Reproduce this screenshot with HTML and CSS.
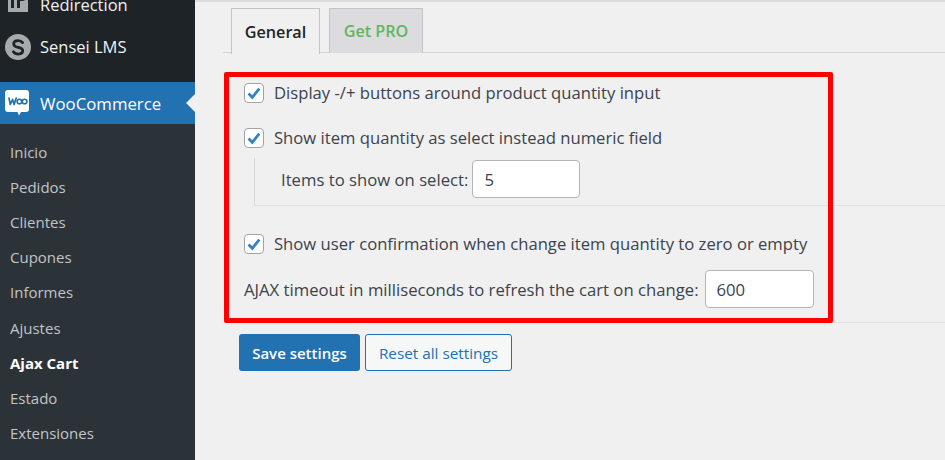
FILE: index.html
```html
<!DOCTYPE html>
<html lang="es">
<head>
<meta charset="utf-8">
<title>Ajax Cart</title>
<link rel="stylesheet" href="styles.css">
</head>
<body>
<div class="page">
  <aside class="sidebar">
    <ul class="menu">
      <li class="menu-item">
        <span class="icon-clip"><svg viewBox="0 0 20 24" width="20" height="24"><path fill="#a7aaad" d="M0 0h20v24H0z"/><path fill="#1d2327" d="M3 2h3v18H3zM9 2h3v18H9zM9 2h5a5 5 0 0 1 0 11H9v-3h4.500a2 2 0 0 0 0-5H9z"/></svg></span>
        <span class="label">Redirection</span>
      </li>
      <li class="menu-item">
        <svg class="icon" viewBox="0 0 26 26" width="26" height="26"><circle cx="13" cy="13" r="13" fill="#a7aaad"/><path fill="none" stroke="#1d2327" stroke-width="2.800" stroke-linecap="round" d="M17.600 8.600c-1-1.400-2.700-2-4.600-2-2.400 0-4.300 1.200-4.300 3.300 0 4.700 9 2.300 9 6.700 0 2.200-2 3.500-4.500 3.500-2 0-3.800-.8-4.800-2.300"/></svg>
        <span class="label">Sensei LMS</span>
      </li>
      <li class="menu-item current">
        <svg class="woo" viewBox="0 0 24 26" width="24" height="26"><path fill="#fff" d="M3 0h18a3 3 0 0 1 3 3v16a3 3 0 0 1-3 3h-5l-2 3.500-1.500-3.500H3a3 3 0 0 1-3-3V3a3 3 0 0 1 3-3z"/><path fill="none" stroke="#2271b1" stroke-width="1.700" stroke-linecap="round" stroke-linejoin="round" d="M4 8l1.300 6.500L7.600 9.500l1.500 5L11.200 8"/><circle cx="14.400" cy="11.500" r="2.300" fill="none" stroke="#2271b1" stroke-width="1.600"/><circle cx="19.600" cy="11.500" r="2.300" fill="none" stroke="#2271b1" stroke-width="1.600"/></svg>
        <span class="label">WooCommerce</span>
      </li>
    </ul>
    <ul class="submenu">
      <li>Inicio</li>
      <li>Pedidos</li>
      <li>Clientes</li>
      <li>Cupones</li>
      <li>Informes</li>
      <li>Ajustes</li>
      <li class="active">Ajax Cart</li>
      <li>Estado</li>
      <li>Extensiones</li>
    </ul>
  </aside>
  <main class="content">
    <nav class="tabs">
      <a class="tab tab-active">General</a>
      <a class="tab tab-pro">Get PRO</a>
    </nav>
    <form class="settings">
      <div class="check-row first">
        <span class="checkbox"><svg viewBox="0 0 20 20" width="20" height="20"><path fill="none" stroke="#3582c4" stroke-width="2.800" d="M4.500 10.500l3.800 3.800 7-8.600"/></svg></span>
        <span class="check-label">Display -/+ buttons around product quantity input</span>
      </div>
      <div class="check-row second">
        <span class="checkbox"><svg viewBox="0 0 20 20" width="20" height="20"><path fill="none" stroke="#3582c4" stroke-width="2.800" d="M4.500 10.500l3.800 3.800 7-8.600"/></svg></span>
        <span class="check-label">Show item quantity as select instead numeric field</span>
      </div>
      <div class="sub-row">
        <span>Items to show on select:</span>
        <span class="input input-small">5</span>
      </div>
      <div class="check-row third">
        <span class="checkbox"><svg viewBox="0 0 20 20" width="20" height="20"><path fill="none" stroke="#3582c4" stroke-width="2.800" d="M4.500 10.500l3.800 3.800 7-8.600"/></svg></span>
        <span class="check-label">Show user confirmation when change item quantity to zero or empty</span>
      </div>
      <div class="timeout-row">
        <span>AJAX timeout in milliseconds to refresh the cart on change:</span>
        <span class="input input-wide">600</span>
      </div>
      <div class="actions">
        <span class="btn btn-primary">Save settings</span>
        <span class="btn btn-secondary">Reset all settings</span>
      </div>
    </form>
    <div class="highlight"></div>
  </main>
</div>
</body>
</html>
```
FILE: styles.css
```css
* { box-sizing: border-box; }
html, body { margin: 0; padding: 0; height: 100%; overflow: hidden; }
body { background: #f0f0f1; font-family: "Open Sans", "Noto Sans", sans-serif; color: #3c434a; font-size: 16.700px; }
.page { display: flex; width: 945px; height: 460px; overflow: hidden; }

.sidebar { width: 195px; flex: none; background: #1d2327; overflow: hidden; }
.menu, .submenu { list-style: none; margin: 0; padding: 0; }
.menu { margin-top: -16px; }
.menu-item { display: flex; align-items: center; height: 42px; padding-left: 5px; color: #f0f0f1; font-size: 16.500px; }
.menu-item .label { margin-left: 9px; line-height: 40px; height: 40px; margin-bottom: 1px; }
.menu-item .icon { flex: none; }
.icon-clip { flex: none; width: 20px; height: 24px; margin: -10px 6px 0 3px; }
.icon-clip svg { display: block; }
.menu-item:nth-child(1) .label { margin-left: 6px; }
.menu-item:nth-child(2) { margin-bottom: 14px; }
.menu-item.current { background: #2271b1; color: #fff; position: relative; }
.menu-item.current .label { margin-left: 11px; margin-bottom: -1px; font-size: 16.800px; }
.menu-item.current::after { content: ""; position: absolute; right: 0; top: 12px; border: 9px solid transparent; border-right-color: #f0f0f1; border-left: 0; }
.submenu { background: #2c3338; padding-top: 10.600px; height: 340px; }
.submenu li { height: 35.200px; line-height: 35.200px; padding-left: 10px; color: #c3c4c7; font-size: 15px; }
.submenu li.active { color: #fff; font-weight: 700; }

.content { flex: 1; position: relative; border-top: 2px solid #dcdcde; }
.tabs { display: flex; gap: 9px; margin-left: 28px; padding-left: 8px; height: 51px; padding-top: 6px; border-bottom: 1px solid #d4d5d7; }
.tab { display: flex; align-items: center; justify-content: center; height: 45px; font-size: 16.200px; font-weight: 600; border: 1px solid #c3c4c7; border-bottom: 0; }
.tab-active { width: 89px; color: #1d2327; background: #f0f0f1; height: 46px; position: relative; z-index: 1; }
.tab-pro { width: 94px; color: #5cb85c; background: #dcdcde; }

.settings { padding-left: 49px; }
.check-row { display: flex; align-items: center; height: 24px; }
.check-row.first { margin-top: 28px; }
.check-row.second { margin-top: 21px; }
.check-row.third { margin-top: 26px; }
.check-label { padding-bottom: 2px; font-size: 16.650px; }
.checkbox { width: 20px; height: 20px; flex: none; margin-right: 10px; background: #fff; border: 1px solid #a0a3a8; border-radius: 4px; display: block; position: relative; overflow: hidden; }
.checkbox svg { position: absolute; left: -1px; top: -1px; }
.sub-row { display: flex; align-items: flex-start; gap: 4px; height: 48px; margin-left: 10px; margin-top: 8px; padding: 2px 0 0 26px; border-left: 1px solid #d5d6d8; border-bottom: 1px solid #e2e2e3; }
.sub-row > span:first-child { line-height: 40px; }
.input { display: flex; align-items: center; height: 38px; padding-left: 11px; background: #fff; border: 1px solid #b4b5b9; border-radius: 4px; }
.input-small { width: 108px; }
.input-wide { width: 109px; }
.timeout-row { display: flex; align-items: flex-start; gap: 6px; height: 53px; margin-top: 14px; border-bottom: 1px solid #e2e2e3; }
.timeout-row > span:first-child { line-height: 39px; }
.actions { display: flex; gap: 5px; margin-top: 11px; margin-left: -5px; }
.btn { display: flex; align-items: center; justify-content: center; height: 37px; border-radius: 3px; font-size: 15px; font-weight: 600; }
.btn-primary { width: 121px; background: #2271b1; color: #fff; }
.btn-secondary { width: 147px; background: #f6f7f7; color: #2271b1; border: 1px solid #2271b1; font-weight: 400; font-size: 15.300px; }

.highlight { position: absolute; left: 29px; top: 70px; width: 609px; height: 251px; border: 5px solid #ff0000; border-radius: 2px; pointer-events: none; }
```
